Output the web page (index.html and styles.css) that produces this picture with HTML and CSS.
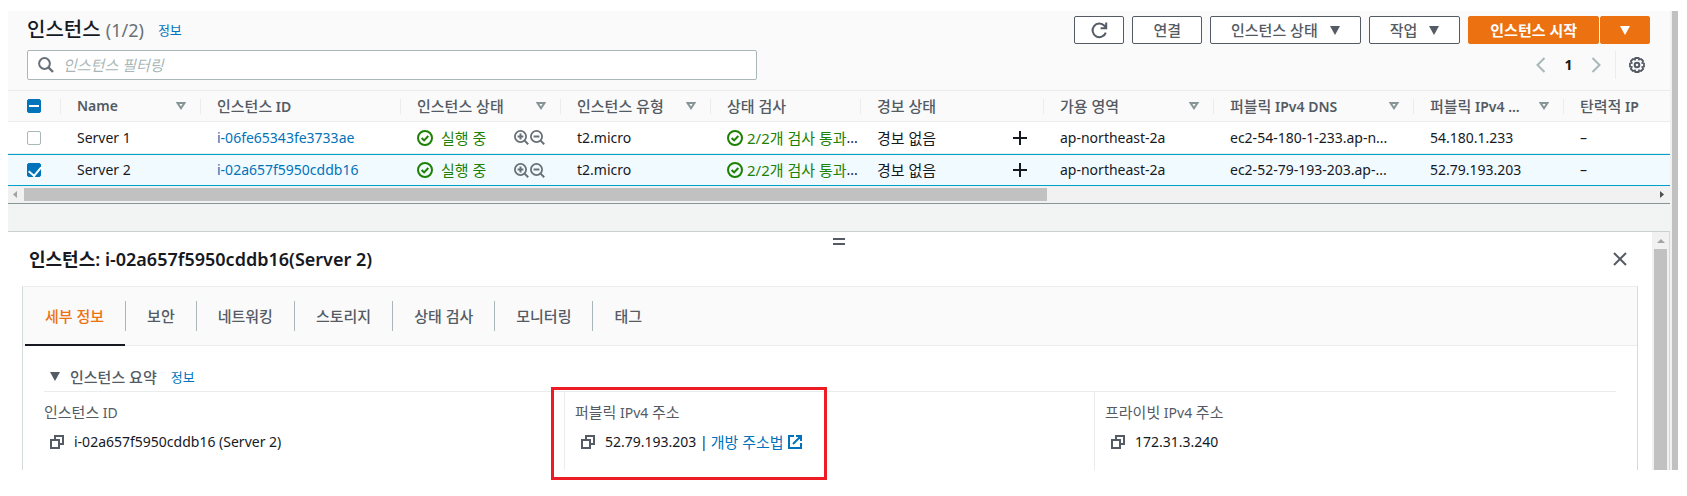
FILE: index.html
```
<!DOCTYPE html>
<html lang="ko">

<head>
  <meta charset="UTF-8">
  <meta name="viewport" content="width=device-width, initial-scale=1.0">
  <title>인스턴스 | EC2</title>
  <link rel="stylesheet" href="styles.css">
</head>

<body>
  <!-- 공용 아이콘 -->
  <svg class="sprite" aria-hidden="true">
    <symbol id="i-sort" viewBox="0 0 10 8"><path d="M1.6 1h6.8L5 6.2z" fill="none" stroke="currentColor" stroke-width="2"/></symbol>
    <symbol id="i-caret" viewBox="0 0 10 9"><path d="M0 0h10L5 9z" fill="currentColor"/></symbol>
    <symbol id="i-ok" viewBox="0 0 16 16"><g fill="none" stroke="currentColor" stroke-width="2"><circle cx="8" cy="8" r="7"/><path d="M4.6 8l2.5 2.4 4.2-4.4"/></g></symbol>
    <symbol id="i-zoom-in" viewBox="0 0 15 15"><path d="M10.6 10.6l3.6 3.6M6.5 3.6v5.8M3.6 6.5h5.8" fill="none" stroke="currentColor" stroke-width="2"/><circle cx="6.5" cy="6.5" r="5.6" fill="none" stroke="currentColor" stroke-width="1.8"/></symbol>
    <symbol id="i-zoom-out" viewBox="0 0 15 15"><path d="M10.6 10.6l3.6 3.6M3.6 6.5h5.8" fill="none" stroke="currentColor" stroke-width="2"/><circle cx="6.5" cy="6.5" r="5.6" fill="none" stroke="currentColor" stroke-width="1.8"/></symbol>
    <symbol id="i-plus" viewBox="0 0 14 14"><path d="M7 0v14M0 7h14" stroke="currentColor" stroke-width="2"/></symbol>
    <symbol id="i-copy" viewBox="0 0 14 14"><path d="M1 5h8v8H1zM5 5V1h8v8H9" fill="none" stroke="currentColor" stroke-width="2"/></symbol>
  </svg>

  <div class="console">
    <main class="content">
      <!-- 인스턴스 목록 -->
      <section class="list">
        <header class="list-header">
          <div class="title-row">
            <h1>인스턴스 <span class="count">(1/2)</span></h1>
            <a class="info" href="#">정보</a>
            <div class="actions">
              <button class="btn btn-icon" aria-label="새로 고침">
                <svg width="17" height="17" viewBox="0 0 17 17"><path d="M14.8 10.600A6.800 6.800 0 1 1 13.400 3.700L15 5.600M15.200 0.500v5.700H9.600" fill="none" stroke="currentColor" stroke-width="2"/></svg>
              </button>
              <button class="btn">연결</button>
              <button class="btn">인스턴스 상태 <svg class="caret"><use href="#i-caret"/></svg></button>
              <button class="btn">작업 <svg class="caret"><use href="#i-caret"/></svg></button>
              <div class="split">
                <button class="btn btn-primary">인스턴스 시작</button>
                <button class="btn btn-primary btn-icon" aria-label="더 보기"><svg class="caret"><use href="#i-caret"/></svg></button>
              </div>
            </div>
          </div>
          <div class="filter-row">
            <label class="search">
              <svg width="16" height="16" viewBox="0 0 16 16"><circle cx="6.5" cy="6.5" r="5.4" fill="none" stroke="currentColor" stroke-width="2"/><path d="M10.4 10.4l4.6 4.6" stroke="currentColor" stroke-width="2.4"/></svg>
              <input type="text" placeholder="인스턴스 필터링" aria-label="인스턴스 필터링">
            </label>
            <div class="pager">
              <button class="plain" aria-label="이전"><svg width="10" height="16" viewBox="0 0 10 16"><path d="M8.5 1L1.5 8l7 7" fill="none" stroke="currentColor" stroke-width="2"/></svg></button>
              <span class="page">1</span>
              <button class="plain" aria-label="다음"><svg width="10" height="16" viewBox="0 0 10 16"><path d="M1.5 1l7 7-7 7" fill="none" stroke="currentColor" stroke-width="2"/></svg></button>
              <button class="plain settings" aria-label="설정"><svg width="16" height="16" viewBox="0 0 16 16" fill="none" stroke="currentColor"><path d="M6.4 1h3.2l.5 1.600 2-.6 2 2-.8 1.900 1.700.6v3l-1.700.6.8 1.900-2 2-2-.6-.5 1.600H6.400l-.5-1.600-2 .6-2-2 .8-1.900L1 9.500v-3l1.700-.6L1.900 4l2-2 2 .6z" stroke-width="1.800"/><circle cx="8" cy="8" r="2.300" stroke-width="2"/></svg></button>
            </div>
          </div>
        </header>

        <table class="instances">
          <colgroup>
            <col class="c-check"><col class="c-name"><col class="c-id"><col class="c-state"><col class="c-type"><col class="c-status">
            <col class="c-alarm"><col class="c-zone"><col class="c-dns"><col class="c-ip"><col>
          </colgroup>
          <thead>
            <tr>
              <th><input type="checkbox" class="mixed" aria-label="모두 선택"></th>
              <th><div class="head">Name <svg class="sort"><use href="#i-sort"/></svg></div></th>
              <th><div class="head"><span><span class="ko">인스턴스</span> ID</span></div></th>
              <th><div class="head"><span class="ko">인스턴스 상태</span> <svg class="sort"><use href="#i-sort"/></svg></div></th>
              <th><div class="head"><span class="ko">인스턴스 유형</span> <svg class="sort"><use href="#i-sort"/></svg></div></th>
              <th><div class="head"><span class="ko">상태 검사</span></div></th>
              <th><div class="head"><span class="ko">경보 상태</span></div></th>
              <th><div class="head"><span class="ko">가용 영역</span> <svg class="sort"><use href="#i-sort"/></svg></div></th>
              <th><div class="head"><span><span class="ko">퍼블릭</span> IPv4 DNS</span> <svg class="sort"><use href="#i-sort"/></svg></div></th>
              <th><div class="head"><span><span class="ko">퍼블릭</span> IPv4 ...</span> <svg class="sort"><use href="#i-sort"/></svg></div></th>
              <th><div class="head"><span><span class="ko">탄력적</span> IP</span></div></th>
            </tr>
          </thead>
          <tbody>
            <tr>
              <td><input type="checkbox" aria-label="Server 1 선택"></td>
              <td>Server 1</td>
              <td><a href="#">i-06fe65343fe3733ae</a></td>
              <td><div class="cell state"><svg class="ok"><use href="#i-ok"/></svg><span class="ko">실행 중</span><span class="zoom"><svg><use href="#i-zoom-in"/></svg><svg><use href="#i-zoom-out"/></svg></span></div></td>
              <td>t2.micro</td>
              <td><div class="cell check"><svg class="ok"><use href="#i-ok"/></svg><span class="ko">2/2개 검사 통과</span>...</div></td>
              <td><div class="cell alarm"><span class="ko">경보 없음</span><button class="plain add" aria-label="경보 추가"><svg width="14" height="14"><use href="#i-plus"/></svg></button></div></td>
              <td>ap-northeast-2a</td>
              <td>ec2-54-180-1-233.ap-n...</td>
              <td>54.180.1.233</td>
              <td>–</td>
            </tr>
            <tr class="selected">
              <td><input type="checkbox" checked aria-label="Server 2 선택"></td>
              <td>Server 2</td>
              <td><a href="#">i-02a657f5950cddb16</a></td>
              <td><div class="cell state"><svg class="ok"><use href="#i-ok"/></svg><span class="ko">실행 중</span><span class="zoom"><svg><use href="#i-zoom-in"/></svg><svg><use href="#i-zoom-out"/></svg></span></div></td>
              <td>t2.micro</td>
              <td><div class="cell check"><svg class="ok"><use href="#i-ok"/></svg><span class="ko">2/2개 검사 통과</span>...</div></td>
              <td><div class="cell alarm"><span class="ko">경보 없음</span><button class="plain add" aria-label="경보 추가"><svg width="14" height="14"><use href="#i-plus"/></svg></button></div></td>
              <td>ap-northeast-2a</td>
              <td>ec2-52-79-193-203.ap-...</td>
              <td>52.79.193.203</td>
              <td>–</td>
            </tr>
          </tbody>
        </table>
        <div class="hscroll">
          <svg width="16" height="17"><path d="M9 5v7L5 8.500z" fill="#a3a3a3"/></svg>
          <div class="track"><div class="thumb"></div></div>
          <svg width="16" height="17"><path d="M6 5v7l4-3.500z" fill="#505050"/></svg>
        </div>
      </section>

      <!-- 세부 정보 패널 -->
      <section class="panel">
        <span class="handle"></span>
        <div class="panel-body">
          <header class="panel-header">
            <h2>인스턴스: i-02a657f5950cddb16(Server 2)</h2>
            <button class="plain close" aria-label="닫기"><svg width="14" height="14" viewBox="0 0 14 14"><path d="M1 1l12 12M13 1L1 13" stroke="currentColor" stroke-width="2"/></svg></button>
          </header>
          <div class="card">
            <nav class="tabs">
              <a class="active" href="#">세부 정보</a>
              <a href="#">보안</a>
              <a href="#">네트워킹</a>
              <a href="#">스토리지</a>
              <a href="#">상태 검사</a>
              <a href="#">모니터링</a>
              <a href="#">태그</a>
            </nav>
            <div class="summary">
              <div class="summary-title">
                <svg class="caret"><use href="#i-caret"/></svg>
                <h3>인스턴스 요약</h3>
                <a class="info" href="#">정보</a>
              </div>
              <dl class="fields">
                <div class="field">
                  <dt><span class="ko">인스턴스</span> ID</dt>
                  <dd><svg class="copy"><use href="#i-copy"/></svg>i-02a657f5950cddb16 (Server 2)</dd>
                </div>
                <div class="field">
                  <dt><span class="ko">퍼블릭</span> IPv4 <span class="ko">주소</span></dt>
                  <dd><svg class="copy"><use href="#i-copy"/></svg>52.79.193.203 |<a class="ko open" href="#">개방 주소법</a><svg class="external" viewBox="0 0 14 14"><path d="M6 1H1v12h12V8M8 1h5v5M13 1L5 9" fill="none" stroke="currentColor" stroke-width="2"/></svg></dd>
                  <div class="highlight"></div>
                </div>
                <div class="field">
                  <dt><span class="ko">프라이빗</span> IPv4 <span class="ko">주소</span></dt>
                  <dd><svg class="copy"><use href="#i-copy"/></svg>172.31.3.240</dd>
                </div>
              </dl>
            </div>
          </div>
        </div>
        <div class="vscroll">
          <svg width="16" height="17"><path d="M4 11h8L8 7z" fill="#a3a3a3"/></svg>
          <div class="thumb"></div>
        </div>
      </section>
    </main>
    <div class="page-scroll"></div>
  </div>
</body>

</html>
```
FILE: styles.css
```
* {
  box-sizing: border-box;
}

body {
  margin: 0;
  padding: 11px 9px 26px 8px;
  background: #fff;
  color: #16191f;
  font: 14px/20px "Noto Sans", "Noto Sans CJK KR", sans-serif;
}

a {
  color: #0073bb;
  text-decoration: none;
}

button {
  font: inherit;
  cursor: pointer;
}

svg {
  display: block;
  flex: none;
}

h1, h2, h3 {
  margin: 0;
}

.sprite {
  position: absolute;
  width: 0;
  height: 0;
}

.console {
  display: flex;
}

.content {
  flex: 1;
  min-width: 0;
  background: #f2f3f3;
}

.page-scroll {
  width: 8px;
  background: #c1c1c1;
  border-left: 2px solid #f1f1f1;
}

/* 공통 요소 */
.plain {
  display: flex;
  padding: 0;
  border: 0;
  background: none;
  color: #545b64;
}

.caret {
  width: 10px;
  height: 9px;
}

.info {
  font-size: 13px;
}

.ko {
  font-size: 15px;
}

/* 목록 헤더 */
.list {
  border-bottom: 1px solid #879596;
}

.list-header {
  padding: 5px 20px 10px 19px;
  background: #fafafa;
}

.title-row {
  display: flex;
  align-items: center;
}

h1 {
  font-size: 20px;
  line-height: 28px;
  font-weight: 500;
}

.count {
  color: #687078;
  font-size: 18px;
  font-weight: 400;
}

.title-row .info {
  margin-left: 14px;
}

.actions {
  display: flex;
  gap: 8px;
  margin-left: auto;
}

.btn {
  display: flex;
  align-items: center;
  gap: 12px;
  height: 28px;
  padding: 0 20px;
  border: 1px solid #545b64;
  border-radius: 2px;
  background: #fff;
  color: #545b64;
  font-size: 15px;
  font-weight: 500;
}

.btn-icon {
  justify-content: center;
  width: 50px;
  padding: 0;
}

.split {
  display: flex;
  gap: 1px;
}

.btn-primary {
  padding: 0 21px;
  border-color: #ec7211;
  background: #ec7211;
  color: #fff;
  font-weight: 700;
}

.btn-primary.btn-icon {
  padding: 0;
}

.filter-row {
  display: flex;
  align-items: center;
  justify-content: space-between;
  margin-top: 6px;
}

.search {
  display: flex;
  align-items: center;
  gap: 9px;
  width: 45%;
  height: 30px;
  padding: 0 10px;
  border: 1px solid #aab7b8;
  border-radius: 2px;
  background: #fff;
  color: #687078;
}

.search input {
  flex: 1;
  padding: 0;
  border: 0;
  outline: 0;
  background: none;
  font: inherit;
  font-size: 15px;
}

.search input::placeholder {
  color: #aab7b8;
  font-style: italic;
}

.pager {
  display: flex;
  align-items: center;
  height: 28px;
  padding-right: 5px;
}

.pager .plain {
  color: #aab7b8;
}

.page {
  width: 45px;
  text-align: center;
  font-weight: 700;
}

.pager .settings {
  align-items: center;
  height: 28px;
  margin-left: 14px;
  padding-left: 13px;
  border-left: 1px solid #eaeded;
  color: #545b64;
}

/* 인스턴스 표 */
.instances {
  width: 100%;
  table-layout: fixed;
  border-collapse: separate;
  border-spacing: 0;
  background: #fff;
}

.c-check { width: 53px; }
.c-name { width: 140px; }
.c-id { width: 200px; }
.c-state { width: 160px; }
.c-type { width: 150px; }
.c-status { width: 150px; }
.c-alarm { width: 183px; }
.c-zone { width: 170px; }
.c-dns { width: 200px; }
.c-ip { width: 150px; }

th,
td {
  height: 32px;
  padding: 0 0 0 16px;
  border-bottom: 1px solid #eaeded;
  text-align: left;
  white-space: nowrap;
}

th:first-child,
td:first-child {
  padding-left: 19px;
}

th {
  border-top: 1px solid #eaeded;
  background: #fafafa;
  color: #545b64;
  font-weight: 600;
}

th .ko {
  font-weight: 500;
}

td {
  color: #16191f;
}

.head {
  display: flex;
  align-items: center;
  justify-content: space-between;
  height: 15px;
  margin-left: -17px;
  padding: 0 15px 0 16px;
  border-left: 1px solid #eaeded;
}

.sort {
  width: 10px;
  height: 8px;
  color: #879596;
}

.selected td {
  border-top: 1px solid #00a1c9;
  border-bottom-color: #00a1c9;
  background: #f1faff;
}

.cell {
  display: flex;
  align-items: center;
}

.ok {
  width: 16px;
  height: 16px;
  color: #1d8102;
}

.state .ko,
.check .ko {
  color: #1d8102;
}

.state .ko {
  margin-left: 8px;
}

.check .ko {
  margin-left: 4px;
}

.zoom {
  display: flex;
  gap: 1px;
  margin-left: auto;
  padding-right: 16px;
  color: #687078;
}

.zoom svg {
  width: 15px;
  height: 15px;
}

.add {
  margin-left: auto;
  margin-right: 17px;
  color: #16191f;
}

input[type="checkbox"] {
  appearance: none;
  display: block;
  position: relative;
  width: 14px;
  height: 14px;
  margin: 0;
  border: 1px solid #aab7b8;
  border-radius: 2px;
  background: #fff;
}

input[type="checkbox"]:checked,
input.mixed {
  border-color: #0073bb;
  background: #0073bb;
}

input[type="checkbox"]:checked::after {
  content: "";
  position: absolute;
  left: 3px;
  top: 0;
  width: 6px;
  height: 10px;
  border: solid #fff;
  border-width: 0 2px 2px 0;
  transform: rotate(40deg);
}

input.mixed::after {
  content: "";
  position: absolute;
  left: 1px;
  top: 5px;
  width: 10px;
  height: 2px;
  background: #fff;
}

/* 스크롤바 */
.hscroll {
  display: flex;
  height: 17px;
  background: #f1f1f1;
}

.track {
  flex: 1;
  padding: 2px 0;
}

.track .thumb {
  width: 62.75%;
  height: 13px;
  background: #c1c1c1;
}

.vscroll {
  display: flex;
  flex-direction: column;
  align-items: center;
  width: 17px;
  background: #f1f1f1;
}

.vscroll .thumb {
  flex: 1;
  width: 13px;
  background: #c1c1c1;
}

/* 세부 정보 패널 */
.panel {
  display: flex;
  position: relative;
  margin-top: 27px;
  border-top: 1px solid #c9d0d0;
  border-right: 1px solid #d5dbdb;
  background: #fff;
}

.panel-body {
  flex: 1;
}

.handle {
  position: absolute;
  top: 6px;
  left: 50%;
  width: 12px;
  height: 7px;
  margin-left: -6px;
  border: solid #545b64;
  border-width: 2px 0;
}

.panel-header {
  display: flex;
  align-items: center;
  justify-content: space-between;
  height: 54px;
  padding: 0 25px 0 21px;
}

h2 {
  font-size: 18px;
  font-weight: 600;
}

.card {
  margin: 0 14px;
  border: 1px solid #eaeded;
  border-bottom: 0;
  border-left-color: #d5dbdb;
  border-right-color: #d5dbdb;
}

.tabs {
  display: flex;
  height: 59px;
  padding: 0 2px;
  border-bottom: 1px solid #eaeded;
  background: #fafafa;
}

.tabs a {
  display: flex;
  align-items: center;
  position: relative;
  padding: 0 21px 0 20px;
  color: #545b64;
  font-size: 15px;
  font-weight: 500;
}

.tabs a + a {
  padding-left: 22px;
}

.tabs a + a::before {
  content: "";
  position: absolute;
  left: 0;
  top: 14px;
  width: 1px;
  height: 30px;
  background: #aab7b8;
}

.tabs .active {
  color: #ec7211;
}

.tabs .active::after {
  content: "";
  position: absolute;
  left: 0;
  right: 0;
  bottom: -1px;
  height: 2px;
  background: #16191f;
}

.summary {
  padding: 16px 21px 0;
}

.summary-title {
  display: flex;
  align-items: center;
  height: 30px;
  padding-left: 6px;
  border-bottom: 1px solid #eaeded;
  color: #545b64;
}

h3 {
  margin: 0 14px 0 10px;
  font-size: 15px;
  font-weight: 500;
}

.fields {
  display: grid;
  grid-template-columns: repeat(3, 1fr);
  margin: 0 -8px 0 -10px;
}

.field {
  position: relative;
  height: 78px;
  padding: 10px 10px 0;
}

.field + .field {
  border-left: 1px solid #eaeded;
}

dt {
  color: #545b64;
}

dd {
  display: flex;
  align-items: center;
  margin: 9px 0 0;
  padding-left: 6px;
}

.copy {
  width: 14px;
  height: 14px;
  margin-right: 10px;
  color: #545b64;
}

.open {
  margin-left: 3px;
}

.external {
  width: 14px;
  height: 14px;
  margin-left: 4px;
  color: #0073bb;
}

/* 퍼블릭 주소 강조 */
.highlight {
  position: absolute;
  top: -5px;
  left: -14px;
  width: 276px;
  height: 93px;
  border: 3px solid #ed1c24;
}
```
